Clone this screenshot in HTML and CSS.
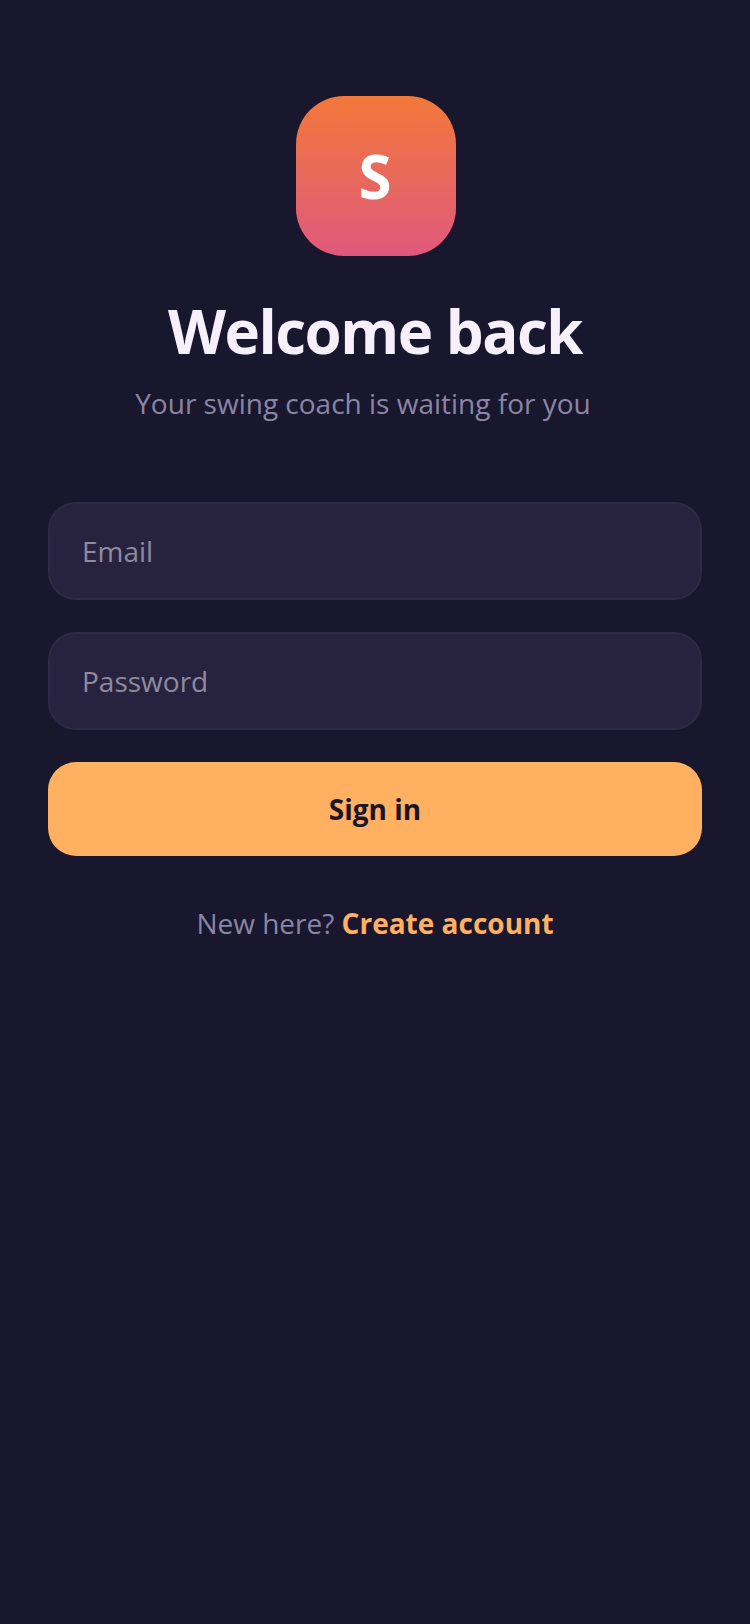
FILE: index.html
```html
<!DOCTYPE html>
<html lang="en">
<head>
<meta charset="utf-8">
<title>Sign in</title>
<link rel="stylesheet" href="styles.css">
</head>
<body class="page">
<main class="screen">
  <div class="logo">S</div>
  <h1 class="title">Welcome back</h1>
  <p class="subtitle">Your swing coach is waiting for you</p>
  <form class="form">
    <input class="field" type="email" placeholder="Email">
    <input class="field" type="password" placeholder="Password">
    <button class="submit" type="button">Sign in</button>
  </form>
  <p class="footer">New here? <a class="link">Create account</a></p>
</main>
</body>
</html>
```
FILE: styles.css
```css
* { box-sizing: border-box; }
html, body { margin: 0; height: 100%; }
.page { background: #18172d; font-family: "Open Sans", sans-serif; }
.screen { display: flex; flex-direction: column; align-items: center; padding: 96px 48px 0; min-height: 1624px; }
.logo { width: 160px; height: 160px; margin-left: 2px; border-radius: 48px; background: linear-gradient(180deg, #f2783a, #e0597d); color: #fff; font-size: 60px; font-weight: 700; display: flex; align-items: center; justify-content: center; padding-right: 2px; }
.title { margin: 39px 0 0; font-size: 60px; line-height: 72px; font-weight: 700; letter-spacing: -1.5px; color: #f5f0fa; }
.subtitle { margin: 17px 24px 0 0; font-size: 28px; line-height: 38px; color: #8a85a5; }
.form { width: 100%; display: flex; flex-direction: column; gap: 32px; margin-top: 80px; }
.field { width: 100%; height: 98px; padding: 0 32px; border: 2px solid #2d2946; border-radius: 28px; background: #27233f; font: 28px "Open Sans", sans-serif; color: #f5f0fa; outline: none; }
.field::placeholder { color: #8f8a9f; opacity: 1; }
.submit { height: 94px; border: 0; border-radius: 28px; background: #ffb060; color: #18152a; font: 700 28px "Open Sans", sans-serif; }
.footer { margin: 48px 0 0; font-size: 28px; line-height: 38px; color: #8a85a5; }
.link { font-weight: 700; color: #ffb060; }
```
